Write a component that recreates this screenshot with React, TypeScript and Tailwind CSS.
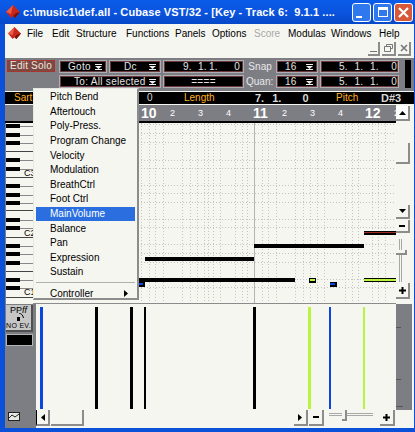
import type { ReactNode } from "react";

const menuItems = [
  { label: "File", w: "w-[25px]" },
  { label: "Edit", w: "w-[24px]" },
  { label: "Structure", w: "w-[50px]" },
  { label: "Functions", w: "w-[49px]" },
  { label: "Panels", w: "w-[37px]" },
  { label: "Options", w: "w-[42px]" },
  { label: "Score", w: "w-[34px]", muted: true },
  { label: "Modulas", w: "w-[43px]" },
  { label: "Windows", w: "w-[48px]" },
  { label: "Help", w: "w-[30px]" },
];

const controllers = [
  "Pitch Bend",
  "Aftertouch",
  "Poly-Press.",
  "Program Change",
  "Velocity",
  "Modulation",
  "BreathCtrl",
  "Foot Ctrl",
  "MainVolume",
  "Balance",
  "Pan",
  "Expression",
  "Sustain",
];

const ruler = [
  { t: "10", big: true },
  { t: "2" },
  { t: "3" },
  { t: "4" },
  { t: "11", big: true },
  { t: "2" },
  { t: "3" },
  { t: "4" },
  { t: "12", big: true },
  { t: "2" },
];

const gridY = [124, 133, 142, 160, 168, 185, 193, 202, 219, 227, 244, 253, 262, 279, 287];
const gridX = [
  141, 149, 155, 163, 182, 190, 197, 204, 208, 213, 220, 235, 242, 247, 262, 268, 276, 295, 303, 310, 317, 324, 345,
  352, 358, 372, 378, 385,
];
const blackKeys = [124, 133, 141, 158, 167, 184, 193, 201, 218, 226, 244, 252, 261, 278, 286];
const keyLines = [151, 177, 210, 237, 271, 297];

const laneBars = [
  { x: 40, w: 3, c: "#0a46e0" },
  { x: 95, w: 3, c: "#000" },
  { x: 130, w: 3, c: "#000" },
  { x: 144, w: 2, c: "#000" },
  { x: 253, w: 3, c: "#000" },
  { x: 308, w: 3, c: "#b8f53c" },
  { x: 329, w: 2, c: "#0a46e0" },
  { x: 363, w: 2, c: "#b8f53c" },
];

function Diamond({ size }: { size: number }) {
  return (
    <svg width={size} height={size} viewBox="0 0 14 14" className="shrink-0">
      <polygon points="7,0 14,7 9,13 7,11 5,13 0,7" fill="#c8281c" />
      <polygon points="7,0 0,7 5,9" fill="#ee5a48" />
      <polygon points="7,11 9,13 14,7 10,8" fill="#7c1008" />
    </svg>
  );
}

function LcdBox({ className, children }: { className: string; children?: ReactNode }) {
  return (
    <div className={"h-[13px] shrink-0 bg-black border border-[#aeaeb4] outline outline-1 outline-[#6a3a3a] -outline-offset-2 flex items-center text-[#e4e4e4] text-[10px] tracking-[0.3px] leading-none " + className}>
      {children}
    </div>
  );
}

function PositionBox() {
  return (
    <LcdBox className="w-[79px] pl-[18px] pr-[1px] gap-[6.5px]">
      <span>5.</span>
      <span>1.</span>
      <span>1.</span>
      <span className="ml-auto">0</span>
    </LcdBox>
  );
}

function DropMark() {
  return (
    <svg width="7" height="6" viewBox="0 0 7 6" className="shrink-0">
      <rect x="0" y="0" width="7" height="1" fill="#eee" />
      <polygon points="0,2 7,2 3.5,5" fill="#eee" />
      <rect x="0" y="5" width="7" height="1" fill="#eee" />
    </svg>
  );
}

function RaisedButton({ className, children }: { className: string; children?: ReactNode }) {
  return (
    <div className={"shrink-0 bg-[#f6f6f0] border-r-2 border-b-2 border-[#8c8c8c] flex items-center justify-center " + className}>
      {children}
    </div>
  );
}

function Plus() {
  return (
    <svg width="7" height="7" viewBox="0 0 7 7">
      <path d="M2.5 0h2v2.5H7v2H4.5V7h-2V4.5H0v-2h2.5z" fill="#000" />
    </svg>
  );
}

function Minus() {
  return <div className="w-[6px] h-[2px] bg-black" />;
}

function TitleButton({ className, children }: { className: string; children: ReactNode }) {
  return (
    <div className={"w-[19px] h-[19px] rounded-[3px] border border-white flex items-center justify-center shrink-0 " + className}>
      {children}
    </div>
  );
}

export default function App() {
  return (
    <div className="relative w-[415px] h-[432px] overflow-hidden flex flex-col bg-[#0a50d8] font-['Liberation_Sans',sans-serif]">
      {/* title bar */}
      <div className="h-[24px] shrink-0 flex items-center pl-[6px] pr-[2px] bg-gradient-to-b from-[#0a5ce8] via-[#0a54e0] to-[#0648c8]">
        <Diamond size={14} />
        <div className="ml-[3px] w-[329px] shrink-0 whitespace-nowrap text-white font-bold text-[11px] tracking-[0.1px]">
          c:\music1\def.all - Cubase VST/32 - [Key - Track 6:&nbsp; 9.1.1 ....
        </div>
        <div className="flex gap-[2px]">
          <TitleButton className="bg-[#2f78ee]">
            <div className="w-[6px] h-[2px] bg-white self-end mb-[3px] mr-[6px]" />
          </TitleButton>
          <TitleButton className="bg-[#2f78ee]">
            <div className="w-[10px] h-[10px] border border-white border-t-[3px]" />
          </TitleButton>
          <TitleButton className="bg-[#d8583a]">
            <svg width="11" height="11" viewBox="0 0 11 11">
              <path d="M1 1l9 9M10 1l-9 9" stroke="#fff" strokeWidth="2.2" />
            </svg>
          </TitleButton>
        </div>
      </div>

      <div className="ml-[5px] mr-[1px] h-[404px] shrink-0 flex flex-col bg-[#f6f6f0]">
        {/* menu bar */}
        <div className="h-[18px] shrink-0 flex items-center pl-[3px] text-[10px] text-black">
          <div className="w-[19px] shrink-0">
            <Diamond size={13} />
          </div>
          {menuItems.map((m) => (
            <div key={m.label} className={"shrink-0 " + m.w + (m.muted ? " text-[#a8a8a8]" : "")}>
              {m.label}
            </div>
          ))}
        </div>

        {/* mdi buttons */}
        <div className="h-[16px] shrink-0 flex justify-end items-start pr-[3px] gap-[2px]">
          <RaisedButton className="w-[12px] h-[14px] !items-end pb-[2px]">
            <div className="w-[7px] h-[1px] bg-[#777]" />
          </RaisedButton>
          <RaisedButton className="w-[14px] h-[14px]">
            <svg width="9" height="8" viewBox="0 0 9 8">
              <path d="M2.5 2V.5h6v4H6.5M.5 2.5h6v5h-6z" fill="none" stroke="#777" />
            </svg>
          </RaisedButton>
          <RaisedButton className="w-[13px] h-[14px]">
            <svg width="8" height="8" viewBox="0 0 8 8">
              <path d="M1 1l6 6M7 1l-6 6" stroke="#777" strokeWidth="1.6" />
            </svg>
          </RaisedButton>
        </div>

        {/* toolbar */}
        <div className="h-[33px] shrink-0 bg-[#7d7d84] flex pt-[2px] text-[#e8e8e8] text-[10px]">
          <div className="w-[54px] shrink-0 pl-[2px]">
            <div className="w-[48px] h-[12px] bg-[#7c4a44] border border-dashed border-[#c02a20] flex items-center justify-center leading-none text-[#f0e4dc] tracking-[0.2px]">
              Edit Solo
            </div>
          </div>
          <div className="flex flex-col gap-[2px] w-[340px] shrink-0">
            <div className="flex gap-[2px] items-center">
              <LcdBox className="w-[48px] pl-[8px] pr-[4px] justify-between">
                Goto
                <DropMark />
              </LcdBox>
              <LcdBox className="w-[52px] pl-[14px] pr-[4px] justify-between">
                Dc
                <DropMark />
              </LcdBox>
              <LcdBox className="w-[81px] pl-[19px] pr-[3px]">
                <span>9.</span>
                <span className="ml-[6px]">1.</span>
                <span className="ml-[2px]">1.</span>
                <span className="ml-auto">0</span>
              </LcdBox>
              <div className="w-[28px] shrink-0 text-right pr-[2px] tracking-[0.1px] leading-none">Snap</div>
              <LcdBox className="w-[42px] pl-[8px] pr-[4px] justify-between">
                16
                <DropMark />
              </LcdBox>
              <PositionBox />
            </div>
            <div className="flex gap-[2px] items-center">
              <LcdBox className="w-[102px] pl-[14px] pr-[4px] justify-between">
                To: All selected
                <DropMark />
              </LcdBox>
              <LcdBox className="w-[81px] justify-center">====</LcdBox>
              <div className="w-[28px] shrink-0 text-right pr-[1px] leading-none">Quan:</div>
              <LcdBox className="w-[42px] pl-[8px] pr-[4px] justify-between">
                16
                <DropMark />
              </LcdBox>
              <PositionBox />
            </div>
          </div>
          <div className="ml-[6px] w-[6px] h-[28px] bg-black" />
        </div>

        {/* status row */}
        <div className="h-[14px] shrink-0 border-t border-b border-[#f6f6f0] bg-black flex items-center text-[10px] leading-none text-[#d8d8d8]">
          <div className="w-[142px] shrink-0 pl-[9px] text-[#ffb020]">Sart</div>
          <div className="w-[37px] shrink-0">0</div>
          <div className="w-[71px] shrink-0 text-[#ffb020]">Length</div>
          <div className="w-[81px] shrink-0 flex gap-[8px] font-bold text-[11px]">
            <span>7.</span>
            <span>1.</span>
            <span className="ml-[13px]">0</span>
          </div>
          <div className="w-[45px] shrink-0 text-[#ffb020]">Pitch</div>
          <div className="font-bold text-[11px]">D#3</div>
        </div>

        {/* ruler */}
        <div className="h-[18px] shrink-0 flex">
          <div className="w-[391px] shrink-0 bg-[#7d7d84] border-b-2 border-black flex pl-[136px] items-center text-white leading-none">
            {ruler.map((r, i) => (
              <div key={i} className={"w-[28px] shrink-0 " + (r.big ? "font-bold text-[14px]" : "text-[9px] pl-[1px]")}>
                {r.t}
              </div>
            ))}
          </div>
          <RaisedButton className="w-[14px] h-[15px] mt-[1px] !bg-white">
            <svg width="7" height="4" viewBox="0 0 7 4">
              <polygon points="3.5,0 7,4 0,4" fill="#000" />
            </svg>
          </RaisedButton>
        </div>

        {/* editor */}
        <div className="h-[181px] shrink-0 flex">
          <svg width="28" height="181" viewBox="5 123 28 181" className="shrink-0 overflow-visible bg-[#f6f6f0]">
            {blackKeys.map((y) => (
              <g key={y}>
                <rect x="6" y={y} width="14" height="4" fill="#000" />
                <rect x="20" y={y + 2} width="13" height="1" fill="#888" />
              </g>
            ))}
            {keyLines.map((y) => (
              <rect key={y} x="6" y={y} width="27" height="1" fill="#444" />
            ))}
            <text x="24" y="176" fontSize="9" fill="#000">C3</text>
            <text x="24" y="236" fontSize="9" fill="#000">C2</text>
            <text x="24" y="295" fontSize="9" fill="#000">C1</text>
            <rect x="5" y="123" width="1" height="181" fill="#7d7d84" />
          </svg>
          <svg width="363" height="181" viewBox="33 123 363 181" className="shrink-0">
            {gridY.map((y) => (
              <line key={y} x1="33" x2="396" y1={y + 0.5} y2={y + 0.5} stroke="#c4c4c0" strokeDasharray="1 2" />
            ))}
            {gridX.map((x) => (
              <line key={x} x1={x + 0.5} x2={x + 0.5} y1="123" y2="304" stroke="#c4c4c0" strokeDasharray="1 2" />
            ))}
            <rect x="254" y="123" width="1" height="181" fill="#b4b4b0" />
            <rect x="33" y="303" width="363" height="1" fill="#8c8c8c" />
            <rect x="254" y="244" width="110" height="4" fill="#000" />
            <rect x="145" y="257" width="109" height="4" fill="#000" />
            <rect x="139" y="278" width="156" height="4" fill="#000" />
            <rect x="364" y="231" width="32" height="4" fill="#000" />
            <rect x="364" y="232" width="32" height="1" fill="#a02a20" />
            <rect x="364" y="278" width="32" height="4" fill="#000" />
            <rect x="364" y="279" width="32" height="2" fill="#b8f53c" />
            <rect x="309" y="278" width="7" height="5" fill="#000" />
            <rect x="310" y="279" width="5" height="2" fill="#b8f53c" />
            <rect x="330" y="282" width="7" height="5" fill="#000" />
            <rect x="330" y="283" width="5" height="2" fill="#0a46e0" />
            <rect x="139" y="282" width="6" height="5" fill="#000" />
            <rect x="139" y="283" width="4" height="2" fill="#0a46e0" />
          </svg>
          <div className="w-[14px] shrink-0 flex flex-col">
            <div className="h-[20px] shrink-0" />
            <RaisedButton className="w-[14px] h-[21px]" />
            <div className="h-[41px] shrink-0" />
            <RaisedButton className="w-[14px] h-[14px]">
              <svg width="7" height="4" viewBox="0 0 7 4">
                <polygon points="0,0 7,0 3.5,4" fill="#000" />
              </svg>
            </RaisedButton>
            <div className="h-[1px] shrink-0" />
            <RaisedButton className="w-[14px] h-[13px]">
              <Minus />
            </RaisedButton>
            <div className="relative h-[50px] shrink-0">
              <div className="absolute left-[3px] top-[6px] w-[3px] h-[43px] border-x border-[#a8a8a8]" />
              <div className="absolute left-0 top-[17px] w-[11px] h-[5px] bg-[#f6f6f0] border-r-2 border-b-2 border-[#8c8c8c]" />
            </div>
            <RaisedButton className="w-[14px] h-[16px]">
              <Plus />
            </RaisedButton>
          </div>
        </div>

        {/* controller lane */}
        <div className="h-[106px] shrink-0 flex">
          <div className="w-[31px] shrink-0 bg-[#7d7d84] flex flex-col pt-[1px] items-start">
            <div className="relative ml-[1px] w-[27px] h-[27px] bg-[#c6c6c6] border-b-2 border-r-2 border-[#505050] flex flex-col items-center leading-none text-black whitespace-nowrap">
              <div className="text-[9px] h-[10px] pt-[1px]">
                PP<span className="italic">ff</span>
              </div>
              <svg width="7" height="5" viewBox="0 0 7 5" className="absolute left-[13px] top-[8px]">
                <path d="M0 0c2 .5 4 2 4.5 5" fill="none" stroke="#000" />
              </svg>
              <div className="w-[3px] h-[4px] mt-[2px] bg-black" />
              <div className="text-[7px] tracking-[0.3px] mt-[1px]">NO EV.</div>
            </div>
            <div className="ml-[1px] mt-[2px] w-[27px] h-[12px] bg-black border border-[#b4b4b8]" />
          </div>
          <svg width="360" height="106" viewBox="36 304 360 106" className="shrink-0">
            {laneBars.map((b) => (
              <rect key={b.x} x={b.x} y="307" width={b.w} height="102" fill={b.c} />
            ))}
          </svg>
          <div className="w-[16px] shrink-0 bg-[#7d7d84] flex flex-col">
            <div className="h-[24px] shrink-0 border-b border-[#555] w-[5px]" />
            <div className="h-[52px] shrink-0 border-b border-[#555] w-[5px]" />
            <div className="h-[27px] shrink-0 border-b border-[#555] w-[7px]" />
          </div>
        </div>

        {/* bottom scrollbar */}
        <div className="h-[18px] shrink-0 flex">
          <div className="w-[31px] shrink-0 bg-[#7d7d84] pl-[3px] pt-[2px]">
            <svg width="12" height="9" viewBox="0 0 12 9">
              <rect x="0.5" y="0.5" width="11" height="8" fill="#e8e8e4" stroke="#222" />
              <path d="M1 6l3-3 3 2 4-3" fill="none" stroke="#222" />
            </svg>
          </div>
          <RaisedButton className="w-[14px] h-[16px] border-l border-l-black">
            <svg width="4" height="7" viewBox="0 0 4 7">
              <polygon points="4,0 4,7 0,3.5" fill="#000" />
            </svg>
          </RaisedButton>
          <RaisedButton className="w-[33px] h-[16px] ml-[1px]" />
          <div className="w-[210px] shrink-0" />
          <RaisedButton className="w-[14px] h-[16px]">
            <svg width="4" height="7" viewBox="0 0 4 7">
              <polygon points="0,0 4,3.5 0,7" fill="#000" />
            </svg>
          </RaisedButton>
          <RaisedButton className="w-[15px] h-[16px] ml-[1px]">
            <Minus />
          </RaisedButton>
          <div className="relative w-[56px] h-[16px] shrink-0">
            <div className="absolute left-[5px] top-[3px] w-[44px] h-[3px] border-y border-[#a8a8a8]" />
            <div className="absolute left-[18px] top-0 w-[5px] h-[11px] bg-[#f6f6f0] border-r-2 border-b-2 border-[#8c8c8c]" />
          </div>
          <RaisedButton className="w-[15px] h-[16px]">
            <Plus />
          </RaisedButton>
        </div>
      </div>

      {/* controller popup */}
      <div className="absolute left-[33px] top-[88px] w-[106px] h-[212px] z-10 bg-[#f6f6f0] border-t border-l border-[#e8e8e4] border-r-2 border-b-2 border-r-[#8c8c8c] border-b-[#8c8c8c] pt-[1px] px-[2px] text-[10px] text-black">
        {controllers.map((c) => (
          <div
            key={c}
            className={
              "h-[14.6px] flex items-center pl-[14px] leading-none " +
              (c === "MainVolume" ? "bg-[#2a6ee0] text-white" : "")
            }
          >
            {c}
          </div>
        ))}
        <div className="h-[1px] bg-[#b0b0ac] mt-[2px] mb-[4px]" />
        <div className="h-[14px] flex items-center justify-between pl-[14px] pr-[7px] leading-none">
          Controller
          <svg width="4" height="7" viewBox="0 0 4 7">
            <polygon points="0,0 4,3.5 0,7" fill="#000" />
          </svg>
        </div>
      </div>
    </div>
  );
}
